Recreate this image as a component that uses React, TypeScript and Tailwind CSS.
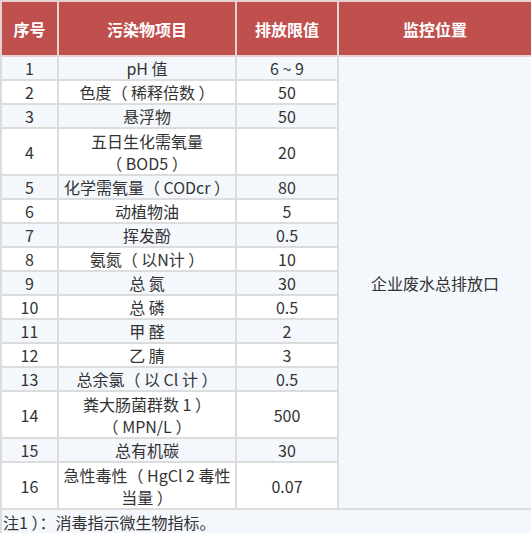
const rows: { no: string; item: React.ReactNode; limit: string; tall?: boolean }[] = [
  { no: '1', item: 'pH 值', limit: '6 ~ 9' },
  { no: '2', item: '色度（ 稀释倍数 ）', limit: '50' },
  { no: '3', item: '悬浮物', limit: '50' },
  {
    no: '4',
    item: (
      <>
        五日生化需氧量
        <br />
        （ BOD5 ）
      </>
    ),
    limit: '20',
    tall: true,
  },
  { no: '5', item: '化学需氧量（ CODcr ）', limit: '80' },
  { no: '6', item: '动植物油', limit: '5' },
  { no: '7', item: '挥发酚', limit: '0.5' },
  { no: '8', item: '氨氮（ 以N计 ）', limit: '10' },
  { no: '9', item: '总 氮', limit: '30' },
  { no: '10', item: '总 磷', limit: '0.5' },
  { no: '11', item: '甲 醛', limit: '2' },
  { no: '12', item: '乙 腈', limit: '3' },
  { no: '13', item: '总余氯（ 以 Cl 计 ）', limit: '0.5' },
  {
    no: '14',
    item: (
      <>
        粪大肠菌群数 1 ）
        <br />
        （ MPN/L ）
      </>
    ),
    limit: '500',
    tall: true,
  },
  { no: '15', item: '总有机碳', limit: '30' },
  {
    no: '16',
    item: (
      <>
        急性毒性（ HgCl 2 毒性
        <br />
        当量 ）
      </>
    ),
    limit: '0.07',
    tall: true,
  },
]

const cell = 'border-2 border-[#dcdcdc] p-0 text-center align-middle'
const head = 'border-2 border-[#e6d2d2] p-0 text-center align-middle font-bold text-white'

export default function App() {
  return (
    <div className="w-[531px] bg-white font-['Noto_Sans_CJK_SC','Microsoft_YaHei',sans-serif] text-[16px] leading-[22px] text-[#333]">
      <table className="w-[531px] table-fixed border-collapse">
        <colgroup>
          <col className="w-[57px]" />
          <col className="w-[178px]" />
          <col className="w-[102px]" />
          <col className="w-[194px]" />
        </colgroup>
        <thead>
          <tr className="h-[55px] bg-[#c0504d]">
            <th className={head}>序号</th>
            <th className={head}>污染物项目</th>
            <th className={head}>排放限值</th>
            <th className={head}>监控位置</th>
          </tr>
        </thead>
        <tbody>
          {rows.map((r, i) => (
            <tr
              key={r.no}
              className={`${r.tall ? 'h-[47px]' : 'h-[24px]'} ${i % 2 === 0 ? 'bg-[#f4f8fd]' : 'bg-white'}`}
            >
              <td className={cell}>{r.no}</td>
              <td className={cell}>{r.item}</td>
              <td className={cell}>{r.limit}</td>
              {i === 0 ? (
                <td rowSpan={rows.length} className={`${cell} bg-[#f4f8fd]`}>
                  企业废水总排放口
                </td>
              ) : null}
            </tr>
          ))}
          <tr className="h-[25px] bg-[#f4f8fd]">
            <td colSpan={4} className="border-2 border-[#dcdcdc] p-0 pl-px text-left align-middle">
              注1 ）：消毒指示微生物指标。
            </td>
          </tr>
        </tbody>
      </table>
    </div>
  )
}
